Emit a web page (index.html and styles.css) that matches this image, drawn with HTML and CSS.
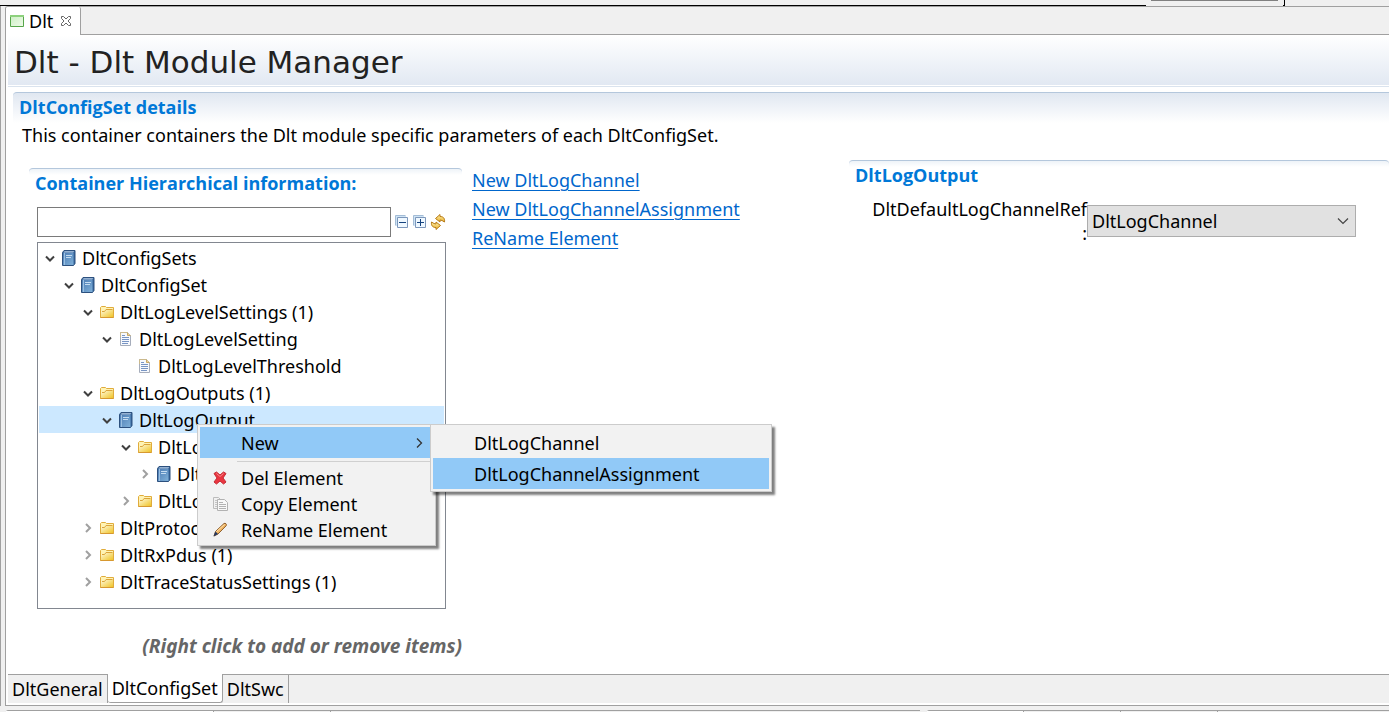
FILE: index.html
```html
<!DOCTYPE html>
<html lang="en">
<head>
<meta charset="utf-8">
<title>Dlt - Dlt Module Manager</title>
<link rel="stylesheet" href="styles.css">
</head>
<body>
<svg class="defs" aria-hidden="true">
  <defs>
    <linearGradient id="gBook" x1="0" y1="0" x2="1" y2="1"><stop offset="0" stop-color="#4d7db5"/><stop offset="1" stop-color="#7fb0d8"/></linearGradient>
    <linearGradient id="gFolder" x1="0" y1="0" x2="1" y2="1"><stop offset="0" stop-color="#fffbe0"/><stop offset="1" stop-color="#f0c428"/></linearGradient>
    <linearGradient id="gGold" x1="0" y1="0" x2="0" y2="1"><stop offset="0" stop-color="#fff0a8"/><stop offset="1" stop-color="#e8b030"/></linearGradient>
    <linearGradient id="gGreen" x1="0" y1="0" x2="1" y2="1"><stop offset="0" stop-color="#ccefc4"/><stop offset="1" stop-color="#effbe9"/></linearGradient>
    <symbol id="down" viewBox="0 0 16 16"><path d="M4 6.500l4 4 4-4" fill="none" stroke="#404040" stroke-width="2"/></symbol>
    <symbol id="right" viewBox="0 0 16 16"><path d="M6 4l4 4-4 4" fill="none" stroke="#a0a0a0" stroke-width="2"/></symbol>
    <symbol id="book" viewBox="0 0 16 16"><path d="M1.500 2.500L3 .5h11v13l-1.500 2h-11z" fill="#35659c" stroke="#2c507e"/><path d="M2 3h10.500v12H2z" fill="url(#gBook)"/><path d="M2.500 2.500L3.700 1.300h9.500L12.200 2.500z" fill="#b7cde5"/><path d="M3.500 3v12" stroke="#9bc0e2"/><path d="M5 5.500h6M5 7.500h5" stroke="#c4dcf1"/></symbol>
    <symbol id="folder" viewBox="0 0 16 16"><path d="M1.500 13.500v-10l1-1h4l1 1h7v10z" fill="#fff3b4" stroke="#e0ac3c"/><path d="M2 13V7h3.500L7 5.500h7V13z" fill="url(#gFolder)"/><path d="M3 7.500h2.500L7 5.500h6.500" fill="none" stroke="#dba43a"/><path d="M1.500 13.500h13" stroke="#d79830"/></symbol>
    <symbol id="page" viewBox="0 0 16 16"><path d="M2.500 1.500h7l3 3v10h-10z" fill="#f7f9fd" stroke="#a6adbb"/><path d="M9.500 1.500v3h3" fill="#f3d493" stroke="#c7a866"/><path d="M2.500 6v-4.500h7" fill="none" stroke="#cbb98c"/><path d="M4 4.500h3M4 6.500h7M4 8.500h7M4 10.500h7M4 12.500h6" stroke="#7895c4"/></symbol>
  </defs>
</svg>

<div class="toolbar-edge"><i class="rule-black"></i><i class="rule-grey"></i><i class="rule-end"></i></div>

<div class="workspace">
  <main class="editor">
    <div class="editor-tabs">
      <button class="editor-tab" type="button">
        <svg class="tab-icon" viewBox="0 0 14 12"><path d="M.5.5h13v11H.5z" fill="url(#gGreen)" stroke="#57a64b"/><path d="M0 1h14" stroke="#8dd17d" stroke-width="2"/></svg>
        <span>Dlt</span>
        <svg class="close-icon" viewBox="0 0 12 12"><path d="M1.500 1.500h2L6 4l2.500-2.500h2v2L8 6l2.500 2.500v2h-2L6 8l-2.500 2.500h-2v-2L4 6 1.500 3.500z" fill="#fff" stroke="#666"/></svg>
      </button>
    </div>

    <header class="form-head"><h1>Dlt - Dlt Module Manager</h1></header>

    <section class="details">
      <h2 class="section-title">DltConfigSet details</h2>
      <p class="description">This container containers the Dlt module specific parameters of each DltConfigSet.</p>

      <div class="columns">
        <section class="hierarchy">
          <h2 class="section-title">Container Hierarchical information:</h2>
          <div class="filter">
            <input type="text" aria-label="Filter">
            <button type="button" aria-label="Collapse all"><svg viewBox="0 0 14 14"><path d="M.5 10.500V.5h10" fill="#cfe4f5" stroke="#a3bcd6"/><path d="M1 1h10v10H1z" fill="#cfe4f5"/><path d="M2.500 2.500h10v10h-10z" fill="#eff8ff" stroke="#7d97bb"/><path d="M4 7.500h7" stroke="#15437f"/></svg></button>
            <button type="button" aria-label="Expand all"><svg viewBox="0 0 14 14"><path d="M.5 10.500V.5h10" fill="#cfe4f5" stroke="#a3bcd6"/><path d="M1 1h10v10H1z" fill="#cfe4f5"/><path d="M2.500 2.500h10v10h-10z" fill="#eff8ff" stroke="#7d97bb"/><path d="M4 7.500h7M7.500 4v7" stroke="#15437f"/></svg></button>
            <button type="button" aria-label="Refresh"><svg class="refresh" viewBox="0 0 16 16"><path d="M5.500 4.500L10 .5v2c3.500 0 5 2 4.500 5.500L12 6.500l-2-.5v2z" fill="url(#gGold)" stroke="#b77a16"/><path d="M10.500 11.500L6 15.500v-2C2.500 13.500 1 11.500 1.500 8L4 9.500l2 .5V8z" fill="url(#gGold)" stroke="#b77a16"/></svg></button>
          </div>

          <ul class="tree">
            <li class="row d0"><svg><use href="#down"/></svg><svg><use href="#book"/></svg><span>DltConfigSets</span></li>
            <li class="row d1"><svg><use href="#down"/></svg><svg><use href="#book"/></svg><span>DltConfigSet</span></li>
            <li class="row d2"><svg><use href="#down"/></svg><svg><use href="#folder"/></svg><span>DltLogLevelSettings (1)</span></li>
            <li class="row d3"><svg><use href="#down"/></svg><svg><use href="#page"/></svg><span>DltLogLevelSetting</span></li>
            <li class="row d4"><svg></svg><svg><use href="#page"/></svg><span>DltLogLevelThreshold</span></li>
            <li class="row d2"><svg><use href="#down"/></svg><svg><use href="#folder"/></svg><span>DltLogOutputs (1)</span></li>
            <li class="row d3 selected"><svg><use href="#down"/></svg><svg><use href="#book"/></svg><span>DltLogOutput</span>
              <div class="menu context">
                <button class="item tall active" type="button"><i></i><span>New</span><svg class="arrow" viewBox="0 0 16 16"><path d="M5 3.500L9.500 8 5 12.500" fill="none" stroke="#333" stroke-width="1.300"/></svg></button>
                <hr>
                <button class="item" type="button"><svg viewBox="0 0 16 16"><path d="M2 3.500L4.500 2 8 5l3.500-3L14 3.500 11 8l3 4-2.500 2L8 11l-3.500 3L2 12l3-4z" fill="#ea3540" stroke="#c42b35"/><path d="M4.500 3.500L8 6.500l3.500-3" fill="none" stroke="#f78a8c"/></svg><span>Del Element</span></button>
                <button class="item" type="button"><svg viewBox="0 0 16 16"><path d="M1.500 1.500h5l2 2v9h-7z" fill="#f1f1f1" stroke="#bcbcbc"/><path d="M3 4.500h3M3 6.500h3M3 8.500h3M3 10.500h3" stroke="#c4c4c4"/><path d="M5.500 3.500h7l3 3v8h-10z" fill="#f8f8f8" stroke="#b2b2b2"/><path d="M7 6.500h4M7 8.500h7M7 10.500h7M7 12.500h7" stroke="#b2b2b2"/></svg><span>Copy Element</span></button>
                <button class="item" type="button"><svg viewBox="0 0 16 16"><path d="M2 14l1.500-4.500L12 1.500c1.500-.8 3 .8 2.200 2.200L6 12z" fill="#f2b765" stroke="#8d5c2a"/><path d="M4.500 9.500L12.500 2.500" stroke="#ffe2ad"/><path d="M1.500 14.500L3.500 9.500 6 12z" fill="#223862"/></svg><span>ReName Element</span></button>
              </div>
              <div class="menu submenu">
                <button class="item tall" type="button"><i></i><span>DltLogChannel</span></button>
                <button class="item tall active" type="button"><i></i><span>DltLogChannelAssignment</span></button>
              </div>
            </li>
            <li class="row d4"><svg><use href="#down"/></svg><svg><use href="#folder"/></svg><span>DltLo</span></li>
            <li class="row d5"><svg><use href="#right"/></svg><svg><use href="#book"/></svg><span>Dlt</span></li>
            <li class="row d4"><svg><use href="#right"/></svg><svg><use href="#folder"/></svg><span>DltLo</span></li>
            <li class="row d2"><svg><use href="#right"/></svg><svg><use href="#folder"/></svg><span>DltProtoc</span></li>
            <li class="row d2"><svg><use href="#right"/></svg><svg><use href="#folder"/></svg><span>DltRxPdus (1)</span></li>
            <li class="row d2"><svg><use href="#right"/></svg><svg><use href="#folder"/></svg><span>DltTraceStatusSettings (1)</span></li>
          </ul>
          <p class="hint">(Right click to add or remove items)</p>
        </section>

        <nav class="actions">
          <a href="#">New DltLogChannel</a>
          <a href="#">New DltLogChannelAssignment</a>
          <a href="#">ReName Element</a>
        </nav>

        <section class="output">
          <h2 class="section-title">DltLogOutput</h2>
          <div class="field">
            <label for="ref">DltDefaultLogChannelRef<br>:</label>
            <div class="select-box">
              <select id="ref"><option>DltLogChannel</option></select>
              <svg class="chevron" viewBox="0 0 12 12"><path d="M1 3.500l5 5 5-5" fill="none" stroke="#444" stroke-width="1.200"/></svg>
            </div>
          </div>
        </section>
      </div>
    </section>

    <nav class="page-tabs">
      <button type="button">DltGeneral</button>
      <button type="button" class="current">DltConfigSet</button>
      <button type="button">DltSwc</button>
    </nav>
  </main>
</div>

<div class="lower-views">
  <div class="view view-left"><i class="on"></i><i></i></div>
  <div class="view view-right"><i class="on"></i><i></i><i></i></div>
</div>
</body>
</html>
```
FILE: styles.css
```css
* { box-sizing: border-box; }

body {
  margin: 0;
  min-height: 100vh;
  display: flex;
  flex-direction: column;
  background: #f0f0f0;
  color: #000;
  font: 18px/24px "Noto Sans", "Open Sans", sans-serif;
  overflow: hidden;
}

button, input, select { font: inherit; color: inherit; }
button { border: 0; background: none; padding: 0; white-space: nowrap; }
h1, h2, p, ul { margin: 0; padding: 0; }
svg { display: block; flex: none; }
.defs { position: absolute; width: 0; height: 0; }

.toolbar-edge { display: flex; height: 6px; }
.rule-black { width: 1146px; border-bottom: 1px solid #000; }
.rule-grey { width: 127px; height: 1px; margin-left: 5px; background: #808080; }
.rule-end { width: 2px; margin-left: 5px; border-right: 1px solid #000; border-bottom: 1px solid #000; }

.workspace {
  flex: 1;
  display: flex;
  padding-left: 4px;
  border-left: 1px solid #a0a0a0;
}

.editor {
  flex: 1;
  min-width: 0;
  display: flex;
  flex-direction: column;
  background: #fff;
  border: solid #a0a0a0;
  border-width: 1px 0 1px 1px;
  border-top-left-radius: 3px;
}

.editor-tabs {
  display: flex;
  height: 28px;
  background: linear-gradient(#a0a0a0, #a0a0a0) bottom / 100% 1px no-repeat #f0f0f0;
  border-top-left-radius: 2px;
}
.editor-tab {
  display: flex;
  align-items: center;
  width: 75px;
  padding-left: 4px;
  background: #fff;
  border-right: 1px solid #a0a0a0;
  border-radius: 2px 2px 0 0;
}
.tab-icon { width: 14px; height: 12px; margin-right: 5px; }
.close-icon { width: 12px; height: 12px; margin-left: 7px; }

.form-head {
  margin-left: 2px;
  height: 52px;
  padding-left: 6px;
  background: linear-gradient(#fff, #e1e8f2);
  border-bottom: 1px solid #dae3ee;
  box-shadow: inset 0 -1px #fff;
}
.form-head h1 {
  font: 31px/54px "DejaVu Sans", sans-serif;
  color: #222;
}

.section-title {
  font-family: "Open Sans", "Noto Sans", sans-serif;
  font-size: 18px;
  line-height: 24px;
  font-weight: 700;
  color: #0078d7;
  white-space: nowrap;
}

.details {
  flex: 1;
  display: flex;
  flex-direction: column;
  margin: 5px 0 0 7px;
  padding: 2px 0 0 6px;
  border-top: 1px solid #b4c7dc;
  border-top-left-radius: 4px;
  background: linear-gradient(#e0e7f1, #fff 30px);
}
.description { padding: 4px 0 0 3px; }

.columns {
  display: grid;
  grid-template-columns: 433fr 367fr 540fr;
  column-gap: 10px;
  padding: 13px 0 0 10px;
}

.hierarchy, .output {
  min-width: 0;
  border-top: 1px solid #b4c7dc;
  border-radius: 4px 4px 0 0;
  background: linear-gradient(#eef3f8, #fff 6px);
}
.hierarchy { margin-top: 8px; padding: 2px 0 0 8px; }
.hierarchy .section-title { margin-left: -2px; }
.output { padding: 2px 33px 0 6px; }

.filter {
  display: flex;
  align-items: center;
  gap: 4px;
  margin: 12px 16px 5px 0;
}
.filter input {
  flex: 1;
  min-width: 0;
  height: 30px;
  border: 1px solid #7a7a7a;
  padding: 0 4px;
}
.filter svg { width: 14px; height: 14px; }
.filter .refresh { width: 16px; height: 16px; margin-left: -1px; }

.tree {
  list-style: none;
  margin-right: 16px;
  padding: 1px 1px 13px;
  border: 1px solid #828790;
}
.row {
  position: relative;
  display: flex;
  align-items: center;
  height: 27px;
}
.row > svg { width: 16px; height: 16px; }
.row > svg:nth-child(2) { margin: 0 5px 0 3px; }
.d0 { padding-left: 3px; }
.d1 { padding-left: 22px; }
.d2 { padding-left: 41px; }
.d3 { padding-left: 60px; }
.d4 { padding-left: 79px; }
.d5 { padding-left: 98px; }
.selected { background: #cce8ff; }
.hint {
  padding-top: 25px;
  text-align: right;
  font-size: 19px;
  font-style: italic;
  font-weight: 700;
  color: #666;
  white-space: nowrap;
}

.menu {
  position: absolute;
  top: 18px;
  padding: 2px;
  background: #f2f2f2;
  border: 1px solid #ccc;
  box-shadow: 3px 3px 2px rgba(0, 0, 0, .5);
}
.context { left: 158px; width: 239px; height: 122px; z-index: 2; }
.submenu { left: 391px; width: 342px; z-index: 3; }
.item {
  display: flex;
  align-items: center;
  width: 100%;
  height: 26px;
}
.item.tall { height: 31px; }
.item.active { background: #91c9f7; }
.item > i { width: 41px; }
.item > svg:first-child { width: 16px; height: 16px; margin: 0 13px 0 12px; }
.item .arrow { width: 16px; height: 16px; margin-left: auto; margin-right: 5px; }
.menu hr { margin: 3px 0 3px 37px; border: 0; border-top: 1px solid #d0d0d0; }

.actions {
  display: flex;
  flex-direction: column;
  align-items: flex-start;
  gap: 5px;
  padding-top: 8px;
  white-space: nowrap;
}
.actions a { color: #0066cc; text-decoration-thickness: 1px; text-underline-offset: 3px; }

.field { display: flex; margin: 10px 0 0 13px; }
.field label { flex: none; width: 219px; text-align: right; white-space: nowrap; }
.select-box { position: relative; flex: 1; margin-top: 8px; }
.select-box select {
  width: 100%;
  height: 32px;
  padding: 0 4px;
  appearance: none;
  background: #e1e1e1;
  border: 1px solid #adadad;
  border-radius: 0;
}
.chevron { position: absolute; right: 7px; top: 10px; width: 12px; height: 12px; pointer-events: none; }

.page-tabs {
  display: flex;
  height: 29px;
  margin: 0 0 2px 2px;
  background: #f0f0f0;
  border-top: 1px solid #a0a0a0;
}
.page-tabs button {
  padding: 0 4px;
  border-right: 1px solid #a0a0a0;
}
.page-tabs .current {
  margin-top: -1px;
  background: #fff;
  border-bottom: 1px solid #a0a0a0;
  border-radius: 0 0 3px 3px;
}

.lower-views { display: flex; gap: 7px; height: 6px; padding: 4px 0 0 6px; }
.view { display: flex; border-top: 1px solid #a0a0a0; border-radius: 3px 0 0 0; }
.view i { width: 97px; border-right: 1px solid #a0a0a0; }
.view .on { background: #fff; }
.view-left { flex: 914; }
.view-left i { width: 117px; }
.view-left .on { width: 208px; }
.view-right { flex: 462; }
```
